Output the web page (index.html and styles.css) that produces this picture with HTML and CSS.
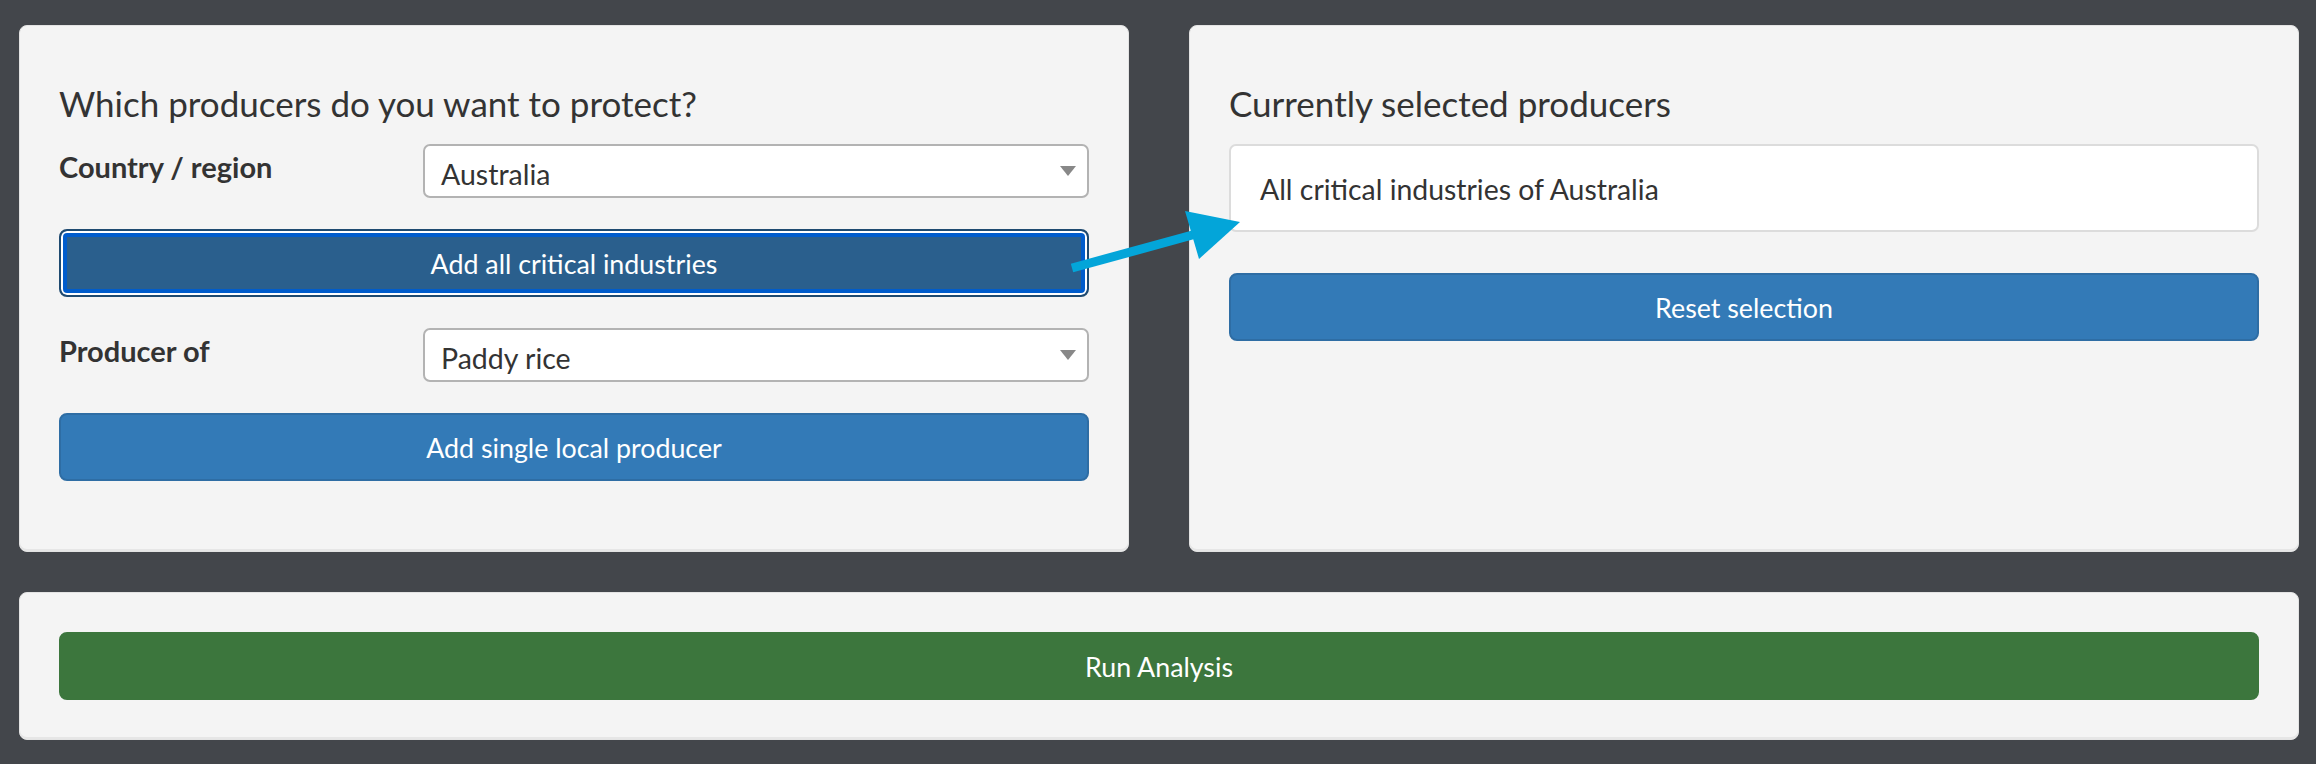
FILE: index.html
```html
<!DOCTYPE html>
<html lang="en">
<head>
<meta charset="utf-8">
<title>Producers</title>
<link rel="stylesheet" href="styles.css">
</head>
<body>
<div class="page">
  <div class="top-row">
    <div class="well">
      <h4 class="title">Which producers do you want to protect?</h4>
      <div class="field">
        <label class="label">Country / region</label>
        <div class="select"><span class="select-text">Australia</span><span class="caret"></span></div>
      </div>
      <button class="btn btn-primary btn-focus">Add all critical industries</button>
      <div class="field">
        <label class="label">Producer of</label>
        <div class="select"><span class="select-text">Paddy rice</span><span class="caret"></span></div>
      </div>
      <button class="btn btn-primary">Add single local producer</button>
    </div>
    <div class="well">
      <h4 class="title">Currently selected producers</h4>
      <div class="output">All critical industries of Australia</div>
      <button class="btn btn-primary btn-reset">Reset selection</button>
    </div>
  </div>
  <div class="well well-bottom">
    <button class="btn btn-success">Run Analysis</button>
  </div>
  <svg class="arrow" width="190" height="80" viewBox="0 0 190 80" aria-hidden="true">
    <line x1="12" y1="68" x2="136" y2="34" stroke="#03a5d9" stroke-width="9"/>
    <polygon points="125,11 180,22 139,59" fill="#03a5d9"/>
  </svg>
</div>
</body>
</html>
```
FILE: styles.css
```css
html, body {
  margin: 0;
  padding: 0;
}
body {
  background: #43464b;
  font-family: Lato, "Open Sans", "Liberation Sans", sans-serif;
  color: #333333;
  font-size: 29px;
}
.page {
  position: relative;
  padding: 25px 17px 25px 19px;
  display: flex;
  flex-direction: column;
  gap: 40px;
}
.top-row {
  display: grid;
  grid-template-columns: 1fr 1fr;
  gap: 60px;
}
.well {
  background: #f4f4f4;
  border: 1px solid #e3e3e3;
  border-radius: 8px;
  padding: 39px;
  box-shadow: inset 0 -2px 0 #e6e6e6;
  display: flex;
  flex-direction: column;
}
.title {
  margin: 17px 0 20px;
  font-size: 35px;
  font-weight: 400;
  line-height: 42px;
  color: #333;
}
.field {
  display: grid;
  grid-template-columns: 364px 1fr;
  align-items: start;
}
.label {
  font-weight: 700;
  padding-top: 3px;
  line-height: 40px;
}
.select {
  height: 54px;
  box-sizing: border-box;
  background: #fff;
  border: 2px solid #b3b3b3;
  border-radius: 7px;
  display: flex;
  align-items: center;
  padding-left: 16px;
}
.select-text {
  padding-top: 6px;
  line-height: 44px;
  font-size: 28.5px;
  color: #333;
}
.caret {
  margin-left: auto;
  margin-right: 11px;
  width: 0;
  height: 0;
  border-left: 8px solid transparent;
  border-right: 8px solid transparent;
  border-top: 10px solid #888;
}
.btn {
  font-family: inherit;
  font-size: 26.8px;
  color: #fff;
  height: 68px;
  border-radius: 8px;
  border: 2px solid transparent;
  margin: 31px 0;
  display: flex;
  align-items: center;
  justify-content: center;
  width: 100%;
  padding: 2px 0 0;
}
.btn-primary {
  background: #337ab7;
  border-color: #2e6da4;
}
.btn-focus {
  background: #2a5f8d;
  border-color: #1f4a70;
  box-shadow: inset 0 0 0 2px #ffffff, inset 0 0 0 6px #005ccc;
}
.btn-success {
  background: #3c763d;
  border-color: #3c763d;
  margin: 0;
}
.output {
  height: 88px;
  box-sizing: border-box;
  background: #fff;
  border: 2px solid #dcdcdc;
  border-radius: 7px;
  display: flex;
  align-items: center;
  padding: 2px 0 0 29px;
  font-size: 28.4px;
}
.btn-reset {
  margin-top: 41px;
}
.well-bottom {
  padding: 39px;
}
.arrow {
  position: absolute;
  left: 1060px;
  top: 200px;
}
```
